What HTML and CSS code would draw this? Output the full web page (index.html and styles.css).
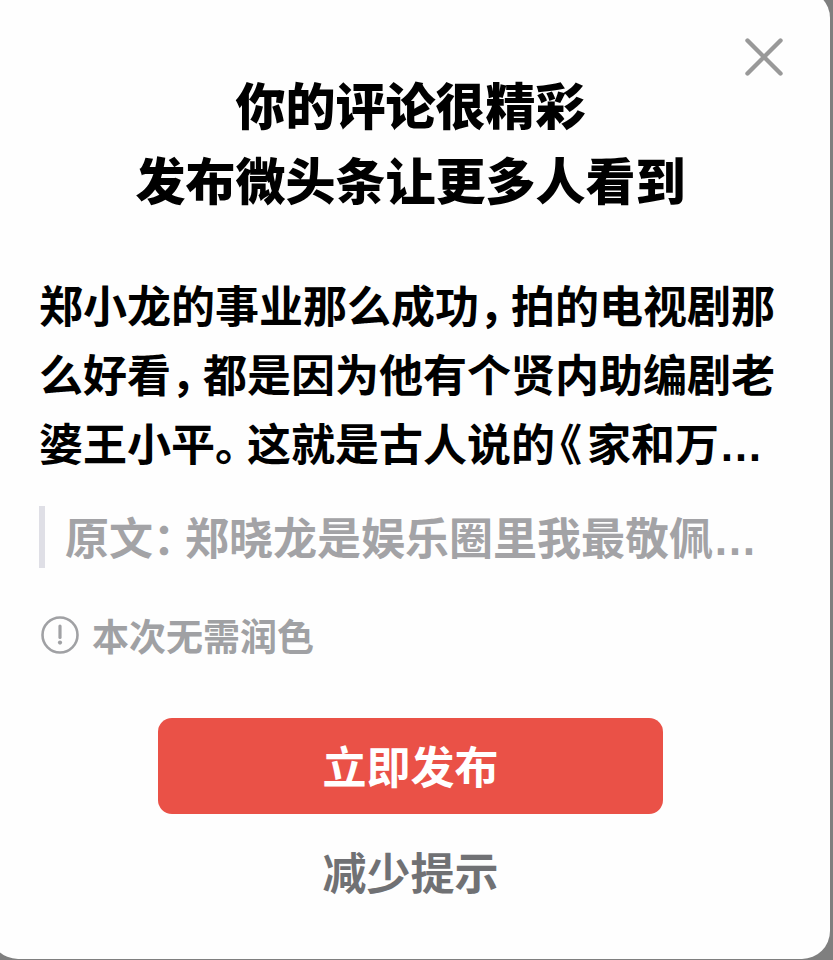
FILE: index.html
```html
<!DOCTYPE html>
<html lang="zh-CN">
<head>
    <meta charset="UTF-8">
    <meta name="viewport" content="width=device-width, initial-scale=1.0">
    <title>发布微头条</title>
    <link rel="stylesheet" href="styles.css">
</head>
<body>
    <div class="dialog" role="dialog" aria-labelledby="dialogTitle">
        <button class="close-button" type="button" aria-label="关闭">
            <svg width="40" height="40" viewBox="0 0 40 40" fill="none" stroke="#999" stroke-width="4.4" stroke-linecap="round">
                <path d="M3.5 3.5L36.5 36.5M36.5 3.5L3.5 36.5"/>
            </svg>
        </button>

        <h1 class="title" id="dialogTitle">你的评论很精彩<br>发布微头条让更多人看到</h1>

        <p class="content">郑小龙的事业那么成功<span class="punct">，</span>拍的电视剧那么好看<span class="punct">，</span>都是因为他有个贤内助编剧老婆王小平<span class="punct">。</span>这就是古人说的<span class="punct punct-open">《</span>家和万…</p>

        <blockquote class="quote">原文<span class="punct">：</span>郑晓龙是娱乐圈里我最敬佩…</blockquote>

        <div class="notice">
            <svg width="40" height="40" viewBox="0 0 40 40" fill="none" stroke="#a0a1a4">
                <circle cx="20" cy="20" r="17.5" stroke-width="2.6"/>
                <path d="M20 11V22.5" stroke-width="3.2" stroke-linecap="round"/>
                <circle cx="20" cy="27.6" r="2.1" fill="#a0a1a4" stroke="none"/>
            </svg>
            <span>本次无需润色</span>
        </div>

        <div class="actions">
            <button class="button" type="button">立即发布</button>
            <button class="link-button" type="button">减少提示</button>
        </div>
    </div>
</body>
</html>
```

FILE: styles.css
```css
* {
    box-sizing: border-box;
}
html {
    overflow: hidden auto;
    scrollbar-width: none;
}
body {
    margin: 0;
    display: flow-root;
    background-color: #7f7f7f;
    font-family: "Liberation Sans", "Noto Sans CJK SC", sans-serif;
    font-weight: 700;
    color: #000;
}
.dialog {
    position: relative;
    min-height: calc(100vh + 9px);
    margin: -10px 3px 0 -10px;
    padding: 81px 36px 40px 49px;
    background: #fefefe;
    border-radius: 28px;
}
.close-button {
    position: absolute;
    top: 47px;
    right: 46px;
    padding: 0;
    border: none;
    background: none;
    line-height: 0;
    cursor: pointer;
}
.title {
    margin: 0 12px 52px 0;
    font-size: 50px;
    line-height: 75px;
    font-weight: 900;
    text-align: center;
}
.content {
    margin: 0;
    font-size: 44px;
    line-height: 69px;
}
/* half-width punctuation with a small gap after it */
.punct {
    font-feature-settings: "halt";
    margin-right: 10px;
}
.punct-open {
    margin: 0 5px;
}
.quote {
    margin: 26px 0 0;
    padding: 6px 0 0 20px;
    border-left: 6px solid #dfdfe6;
    font-size: 44px;
    line-height: 56px;
    color: #a3a3a6;
}
.notice {
    display: flex;
    align-items: flex-start;
    gap: 12px;
    margin-top: 47px;
    padding-left: 1px;
    font-size: 37px;
    line-height: 48px;
    color: #a0a1a4;
}
.actions {
    display: flex;
    flex-direction: column;
    align-items: center;
    margin: 55px 12px 0 0;
}
.button {
    width: 68%;
    height: 96px;
    padding: 0 0 2px;
    border: none;
    border-radius: 14px;
    background-color: #ea5147;
    color: #fff;
    font: inherit;
    font-size: 44px;
    cursor: pointer;
}
.button:hover {
    background-color: #d9453b;
}
.link-button {
    margin-top: 25px;
    padding: 0 20px;
    border: none;
    background: none;
    color: #707174;
    font: inherit;
    font-size: 44px;
    line-height: 72px;
    cursor: pointer;
}
```
